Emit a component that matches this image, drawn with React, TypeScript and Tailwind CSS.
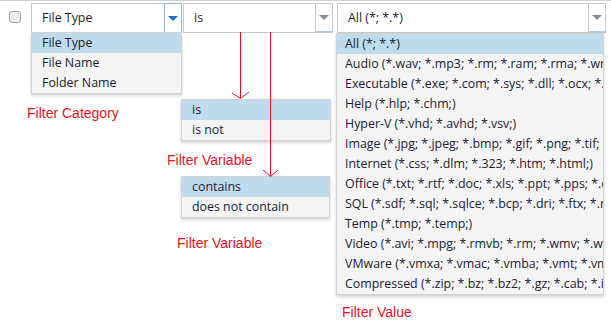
import React from 'react';

const font = { fontFamily: '"Liberation Sans", Arial, sans-serif' };
const itemFont = { fontFamily: '"Open Sans", "Liberation Sans", sans-serif' };

const valueItems = [
  'All (*; *.*)',
  'Audio (*.wav; *.mp3; *.rm; *.ram; *.rma; *.wma; *.mid;)',
  'Executable (*.exe; *.com; *.sys; *.dll; *.ocx; *.bat;)',
  'Help (*.hlp; *.chm;)',
  'Hyper-V (*.vhd; *.avhd; *.vsv;)',
  'Image (*.jpg; *.jpeg; *.bmp; *.gif; *.png; *.tif; *.tiff;)',
  'Internet (*.css; *.dlm; *.323; *.htm; *.html;)',
  'Office (*.txt; *.rtf; *.doc; *.xls; *.ppt; *.pps; *.docx;)',
  'SQL (*.sdf; *.sql; *.sqlce; *.bcp; *.dri; *.ftx; *.mdf;)',
  'Temp (*.tmp; *.temp;)',
  'Video (*.avi; *.mpg; *.rmvb; *.rm; *.wmv; *.wmx;)',
  'VMware (*.vmxa; *.vmac; *.vmba; *.vmt; *.vmdk;)',
  'Compressed (*.zip; *.bz; *.bz2; *.gz; *.cab; *.iso;)',
];

function Select({ label, width, active }: { label: string; width: string; active?: boolean }) {
  return (
    <div className={`flex h-[30px] ${width} border border-[#c9c9c9] bg-white`}>
      <div className="flex flex-1 items-center pl-[10px] text-[12.4px] text-[#1b1b33]" style={itemFont}>
        {label}
      </div>
      <div
        className={
          active
            ? 'flex w-[18px] items-center justify-center -my-px -mr-px border border-[#8cb8e4]'
            : 'flex w-[17px] items-center justify-center border-l border-b border-l-[#c9c9c9] border-b-[#a9cdee]'
        }
      >
        <div
          className={`h-0 w-0 border-x-[5px] border-t-[5px] border-x-transparent ${
            active ? 'border-t-[#1d6dbf]' : 'border-t-[#8a8a8a]'
          }`}
        />
      </div>
    </div>
  );
}

function List({ items, className }: { items: string[]; className: string }) {
  return (
    <div
      className={`absolute overflow-hidden border border-[#d2d2d2] bg-[#f4f4f4] shadow-[0_2px_3px_rgba(0,0,0,0.18)] ${className}`}
      style={itemFont}
    >
      {items.map((t, i) => (
        <div
          key={t}
          className={`flex h-[20px] items-center whitespace-nowrap text-[12.4px] text-[#1b1b33] ${
            i === 0 ? 'bg-[#bedcee]' : ''
          }`}
        >
          {t}
        </div>
      ))}
    </div>
  );
}

export default function App() {
  return (
    <div className="relative h-[326px] w-[611px] overflow-hidden bg-white" style={font}>
      <div className="h-px bg-[#d0d0d0]" />
      {/* Filter row */}
      <div className="flex items-start pt-[2px]">
        <div className="ml-[9px] mt-[8px] h-[12px] w-[12px] rounded-[3px] border border-[#a4a4a4] bg-[#ececec]" />
        <div className="ml-[10px] flex gap-[1px]">
          <Select label="File Type" width="w-[151px]" active />
          <Select label="is" width="w-[150px]" />
          <div className="w-[2px]" />
          <Select label="All (*; *.*)" width="w-[269px]" />
        </div>
      </div>

      {/* Dropdowns */}
      <List items={['File Type', 'File Name', 'Folder Name']} className="left-[31px] top-[32px] w-[151px] [&>div]:pl-[10px]" />
      <List items={['is', 'is not']} className="left-[181px] top-[99px] w-[150px] [&>div]:pl-[10px]" />
      <List items={['contains', 'does not contain']} className="left-[181px] top-[176px] w-[149px] [&>div]:pl-[10px]" />
      <List items={valueItems} className="left-[336px] top-[33px] w-[268px] [&>div]:pl-[8px]" />

      {/* Annotations */}
      <svg className="absolute left-0 top-0" width="611" height="326" fill="none" stroke="#e8121f" strokeWidth="1">
        <path d="M240.5 32 V98" />
        <path d="M232 93 L240.5 98.5 L249 92" />
        <path d="M270.5 32 V176" />
        <path d="M263 170 L270.5 176.5 L278 170" />
      </svg>
      <div className="absolute left-[27px] top-[104px] text-[14px] leading-[18px] text-[#e8121f]">Filter Category</div>
      <div className="absolute left-[167px] top-[151px] text-[14px] leading-[18px] text-[#e8121f]">Filter Variable</div>
      <div className="absolute left-[177px] top-[234px] text-[14px] leading-[18px] text-[#e8121f]">Filter Variable</div>
      <div className="absolute left-[342px] top-[303px] text-[14px] leading-[18px] text-[#e8121f]">Filter Value</div>
    </div>
  );
}
